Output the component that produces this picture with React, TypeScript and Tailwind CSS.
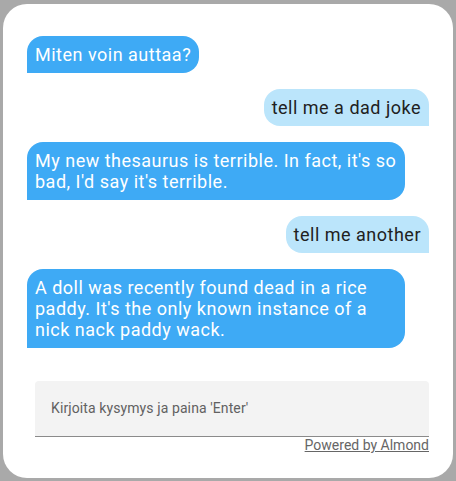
import React from "react";

type Msg = { from: "bot" | "user"; text: string };

const messages: Msg[] = [
  { from: "bot", text: "Miten voin auttaa?" },
  { from: "user", text: "tell me a dad joke" },
  { from: "bot", text: "My new thesaurus is terrible. In fact, it's so bad, I'd say it's terrible." },
  { from: "user", text: "tell me another" },
  { from: "bot", text: "A doll was recently found dead in a rice paddy. It's the only known instance of a nick nack paddy wack." },
];

export default function App() {
  return (
    <div
      className="w-[456px] h-[481px] bg-[#a9a9a9] pt-[4px] pl-[3px] overflow-hidden"
      style={{ fontFamily: "Roboto, 'Liberation Sans', sans-serif" }}
    >
      <div className="w-[450px] h-[474px] bg-white rounded-[24px] pt-[32px] px-[24px] flex flex-col">
        <div className="flex flex-col gap-[16px]">
          {messages.map((m, i) =>
            m.from === "bot" ? (
              <div key={i} className="flex justify-start">
                <div className="max-w-[378px] bg-[#3eaaf5] text-white text-[18px] leading-[21px] tracking-[0.5px] px-[8px] py-[8px] rounded-[16px] rounded-bl-none">
                  {m.text}
                </div>
              </div>
            ) : (
              <div key={i} className="flex justify-end">
                <div className="max-w-[378px] bg-[#bbe5fb] text-[#212121] text-[18px] leading-[21px] tracking-[0.5px] px-[8px] py-[8px] rounded-[16px] rounded-br-none">
                  {m.text}
                </div>
              </div>
            )
          )}
        </div>
        <div className="mt-[33px] ml-[8px]">
          <div className="h-[56px] bg-[#f3f3f3] rounded-t-[4px] border-b border-[#8a8a8a] flex items-center px-[16px]">
            <span className="text-[14px] tracking-[0.1px] text-[#616161]">Kirjoita kysymys ja paina 'Enter'</span>
          </div>
          <div className="flex justify-end">
            <a className="text-[14px] leading-[16px] text-[#666666] underline">Powered by Almond</a>
          </div>
        </div>
      </div>
    </div>
  );
}
